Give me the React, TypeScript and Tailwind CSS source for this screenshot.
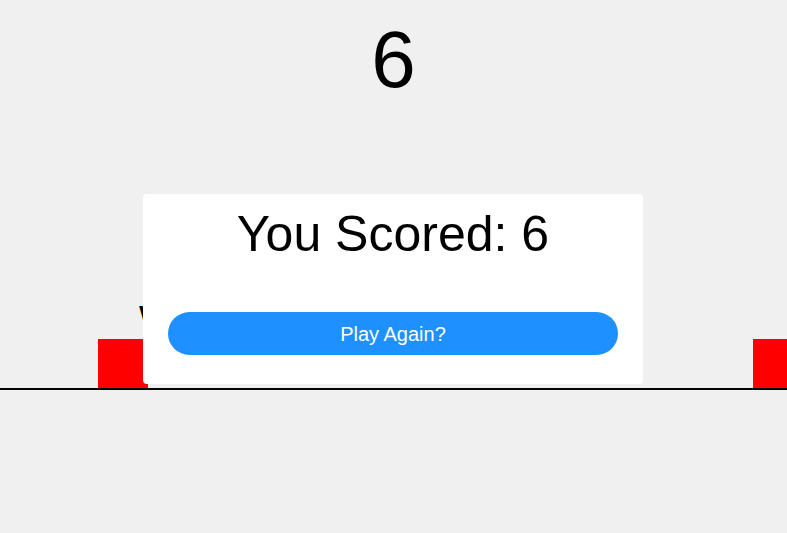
import React from "react";

const App: React.FC = () => {
  const score = 6;

  return (
    <div
      className="relative w-full h-[533px] overflow-hidden bg-[#f0f0f0] text-black"
      style={{ fontFamily: '"Liberation Sans", Arial, sans-serif' }}
    >
      {/* Score */}
      <div className="pt-[20px] text-center text-[80px] leading-none">{score}</div>

      {/* Game canvas */}
      <div className="absolute left-0 top-0 w-full h-full">
        <span className="absolute left-[139px] top-[302px] text-[36px] leading-none">W</span>
        <div className="absolute left-[98px] top-[339px] w-[50px] h-[50px] bg-[#ff0000]" />
        <div className="absolute left-[753px] top-[339px] w-[50px] h-[50px] bg-[#ff0000]" />
        <div className="absolute left-0 top-[388px] w-full h-[2px] bg-black" />
      </div>

      {/* Game over modal */}
      <div className="absolute left-[143px] top-[194px] w-[500px] h-[190px] bg-white rounded-[4px] flex flex-col items-center pt-[15px]">
        <h2 className="text-[50px] leading-none font-normal">You Scored: {score}</h2>
        <button className="mt-[53px] w-[450px] h-[43px] rounded-full bg-[#1e90ff] text-white text-[20px] leading-none">
          Play Again?
        </button>
      </div>
    </div>
  );
};

export default App;
